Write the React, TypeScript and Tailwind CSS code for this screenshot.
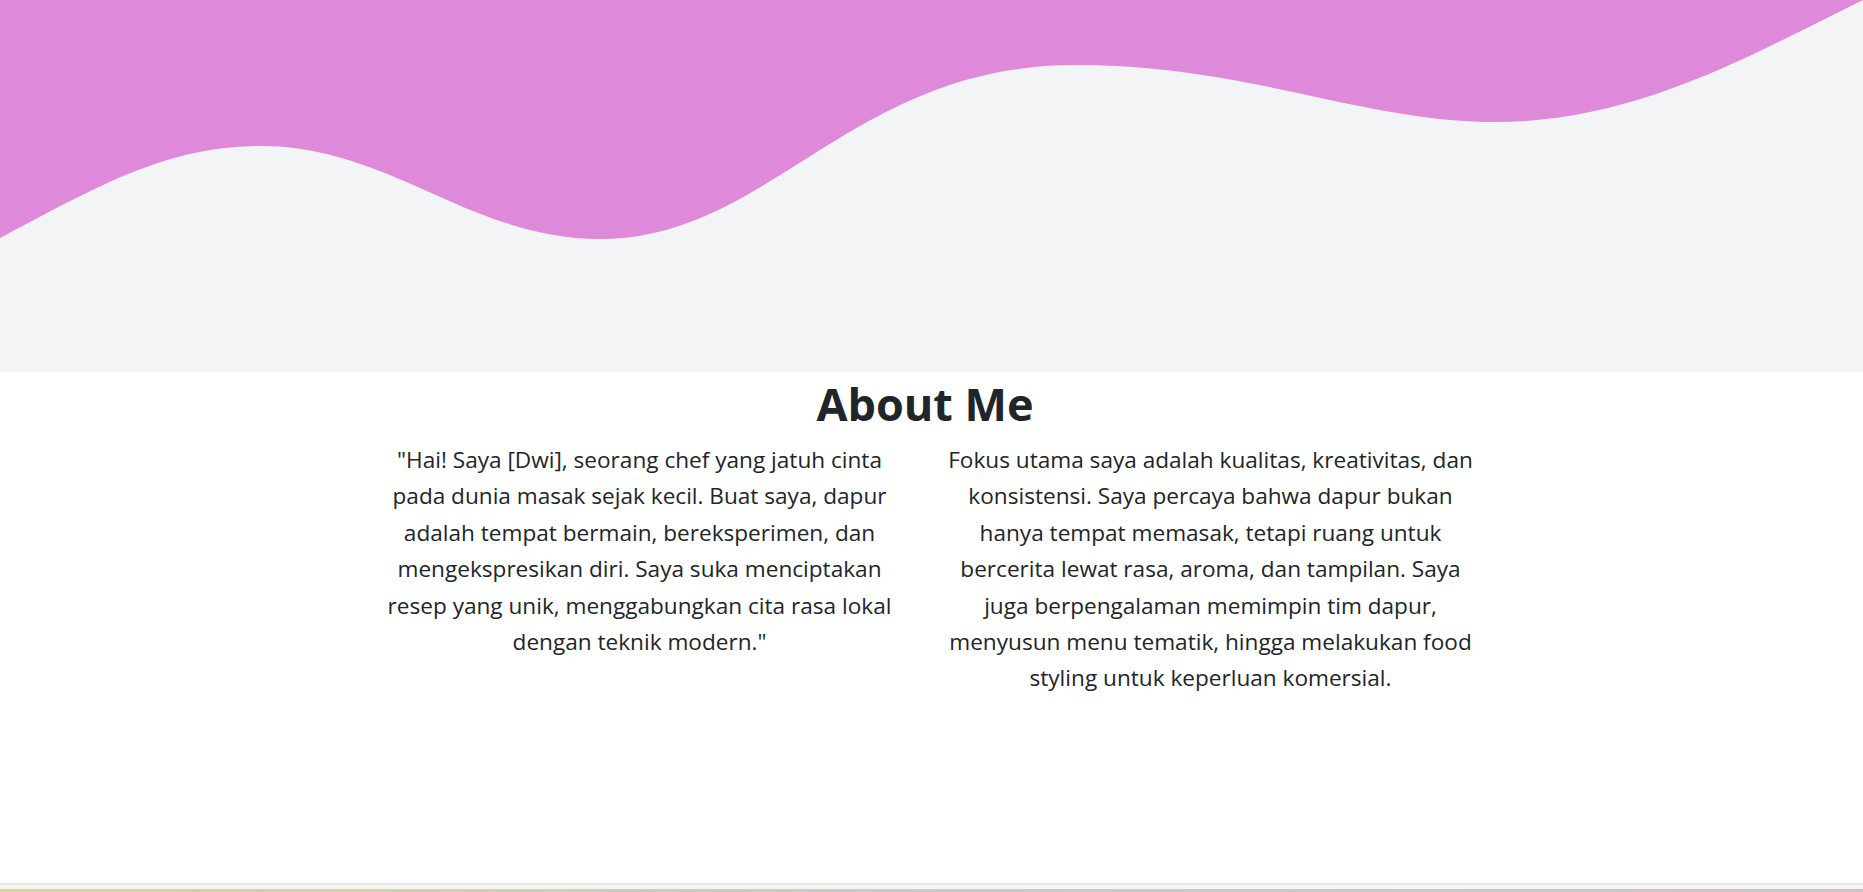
export default function App() {
  return (
    <div className="min-h-screen bg-white text-[#212529] font-['Open_Sans',sans-serif]">
      {/* Wave */}
      <div className="w-full h-[372px] bg-[#f3f4f6]">
        <svg
          viewBox="0 0 1863 372"
          preserveAspectRatio="none"
          className="block w-full h-[372px]"
        >
          <path
            fill="#df89da"
            d="M0,238 C95,188 165,146 261,146 C390,146 470,239 600,239 C770,239 850,65 1075,65 C1250,65 1360,122 1497,122 C1640,122 1760,50 1863,0 L0,0 Z"
          />
        </svg>
      </div>

      {/* About */}
      <section className="flex flex-col items-center pr-[13px] h-[511px]">
        <h1 className="mt-0 text-[45px] font-bold leading-[64px]">About Me</h1>
        <div className="mt-[6px] flex gap-[44px] text-center text-[22.6px] leading-[36.4px]">
          <p className="w-[527px]">
            "Hai! Saya [Dwi], seorang chef yang jatuh cinta pada dunia masak sejak kecil. Buat
            saya, dapur adalah tempat bermain, bereksperimen, dan mengekspresikan diri. Saya
            suka menciptakan resep yang unik, menggabungkan cita rasa lokal dengan teknik
            modern."
          </p>
          <p className="w-[527px]">
            Fokus utama saya adalah kualitas, kreativitas, dan konsistensi. Saya percaya bahwa
            dapur bukan hanya tempat memasak, tetapi ruang untuk bercerita lewat rasa, aroma,
            dan tampilan. Saya juga berpengalaman memimpin tim dapur, menyusun menu tematik,
            hingga melakukan food styling untuk keperluan komersial.
          </p>
        </div>
      </section>

      {/* Footer edge */}
      <footer className="border-t-2 border-[#e6e6e6] bg-[#f6f6f6]">
        <div className="h-[4px]" />
        <div className="h-[3px] bg-gradient-to-r from-[#d6d29c] via-[#c9c9c9] to-[#cbc3c3]" />
      </footer>
    </div>
  );
}
